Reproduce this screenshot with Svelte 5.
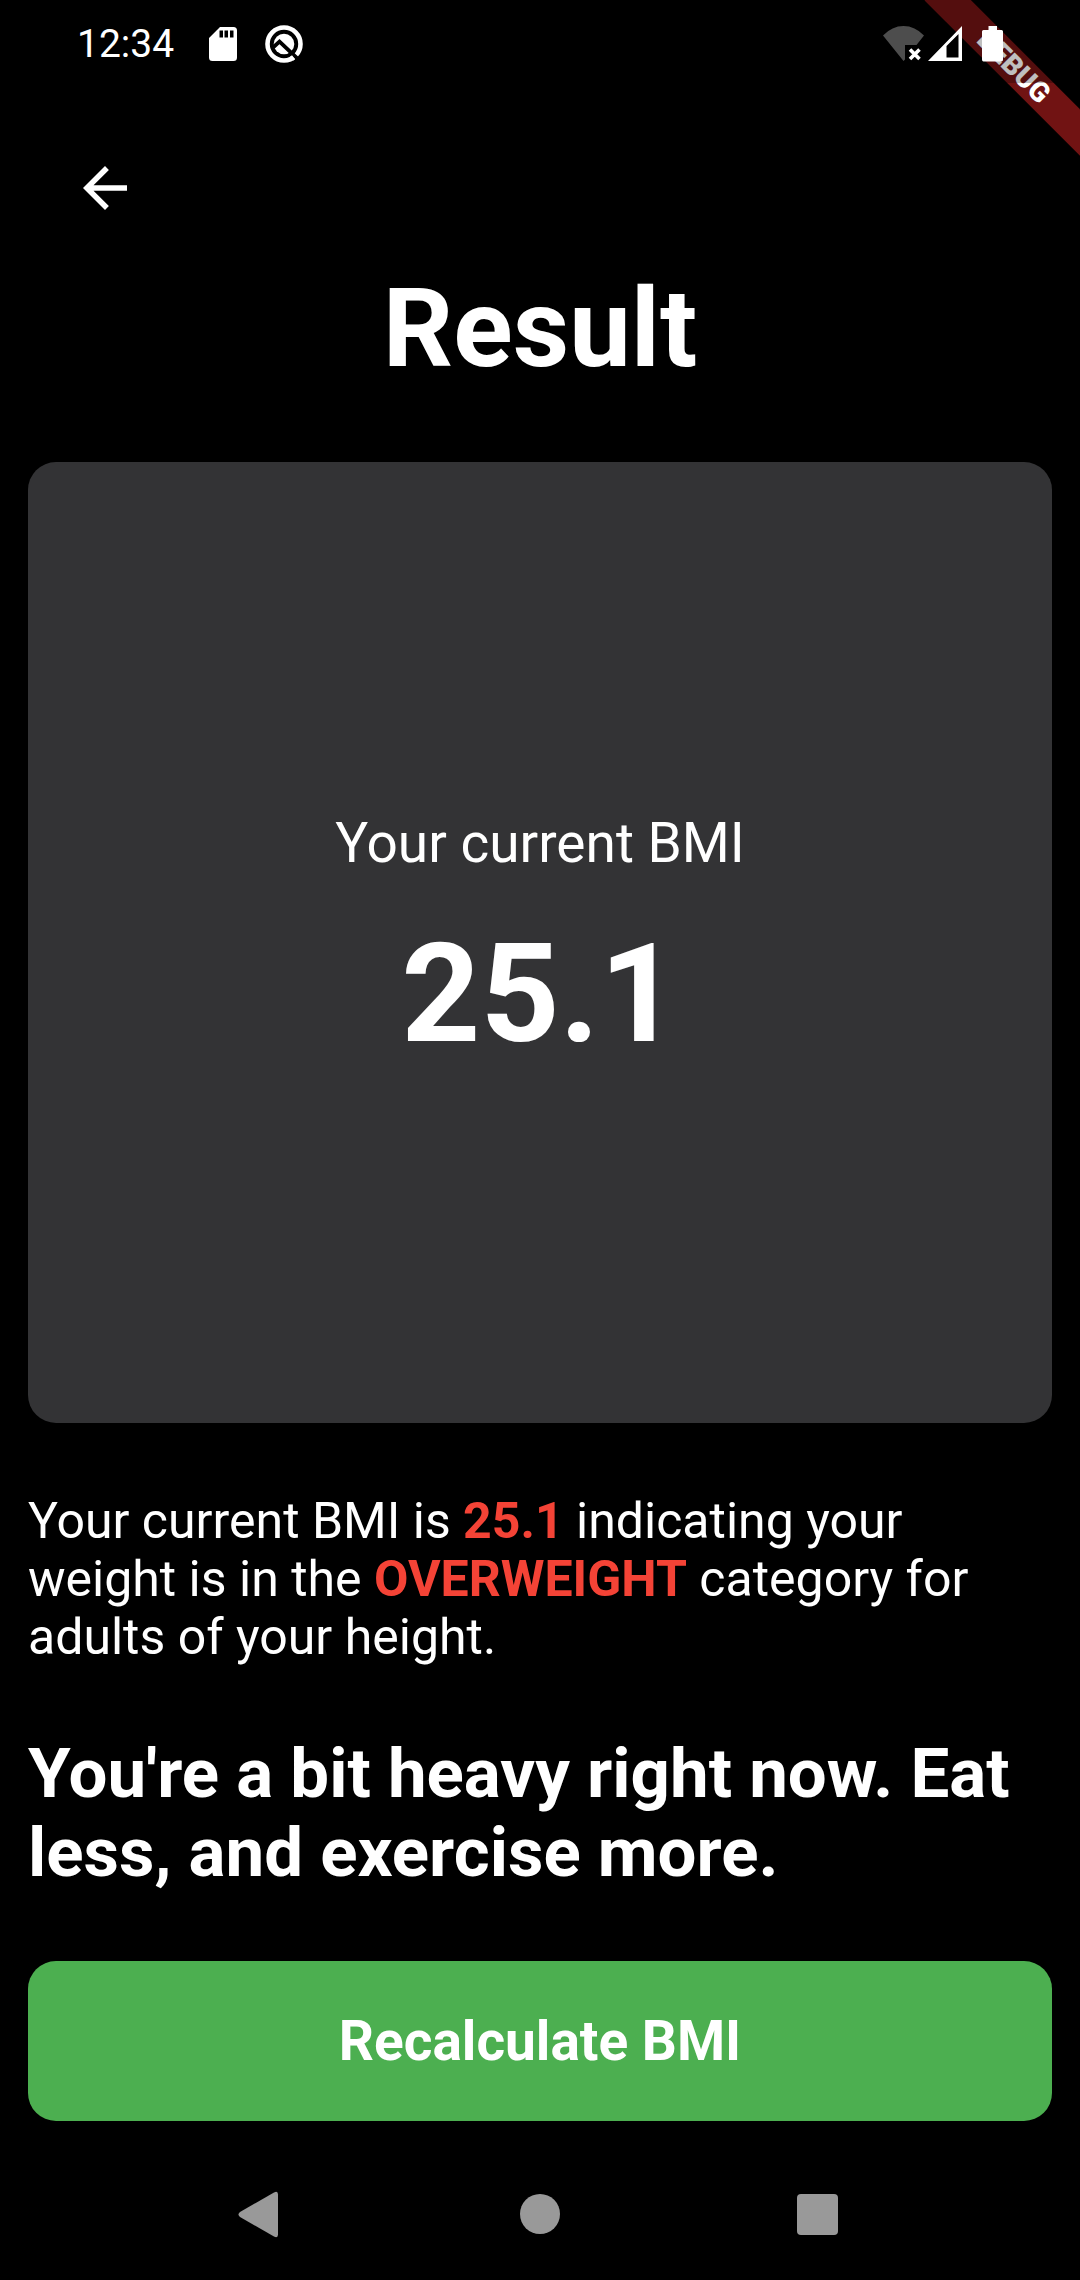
<script>
  let { bmi = 25.1, category = 'OVERWEIGHT' } = $props();
</script>

<div class="screen">
  <div class="banner-clip"><span class="banner">DEBUG</span></div>

  <div class="status">
    <span class="time">12:34</span>
    <svg class="sd" width="28" height="36" viewBox="0 0 28 36" aria-hidden="true">
      <path fill="#fff" fill-rule="evenodd" d="M11 1H24.500a3.500 3.500 0 0 1 3.500 3.500V31.500a3.500 3.500 0 0 1-3.500 3.500H3.500A3.500 3.500 0 0 1 0 31.500V12zM10.500 4.500v7h3.500v-7zM15.500 4.500v7h3.500v-7zM21 4.500v7h3.500v-7z" />
    </svg>
    <svg class="q" width="38" height="38" viewBox="0 0 38 38" aria-hidden="true">
      <circle cx="19" cy="19" r="16.500" fill="none" stroke="#fff" stroke-width="4.600" />
      <circle cx="19" cy="19" r="10.300" fill="#fff" />
      <path d="M8 22.500l6.500-6L36 37" fill="none" stroke="#000" stroke-width="3.800" />
      <path d="M26 31l3 4" stroke="#fff" stroke-width="2.500" />
    </svg>
    <div class="signals">
      <svg width="42" height="36" viewBox="0 0 42 36" aria-hidden="true">
        <path fill="#4d4d4d" d="M0 9.500Q9 0 20.500 0T41 9.500L33.500 19H22v14.500l-1.500 1.500z" />
        <path d="M27 23.500l9.500 9.500M36.500 23.500L27 33" stroke="#fff" stroke-width="3.600" />
      </svg>
      <svg class="cell" width="34" height="36" viewBox="0 0 34 36" aria-hidden="true">
        <path fill="#fff" fill-rule="evenodd" d="M0 35L34 0V35zM18.500 20v11.500h12V8z" />
      </svg>
      <svg class="battery" width="21" height="36" viewBox="0 0 21 36" aria-hidden="true">
        <path fill="#fff" d="M6.500 0h8.500v4h4.500q1.500 0 1.500 1.500v28q0 2-1.500 2h-18q-1.500 0-1.500-2v-28Q0 4 1.500 4h5z" />
      </svg>
    </div>
  </div>

  <header>
    <button class="back" aria-label="Back">
      <svg width="66" height="66" viewBox="0 0 24 24"><path fill="#fff" d="M20 11H7.830l5.590-5.590L12 4l-8 8 8 8 1.410-1.410L7.830 13H20z" /></svg>
    </button>
  </header>

  <main>
    <h1>Result</h1>
    <section class="card">
      <p class="label">Your current BMI</p>
      <p class="value">{bmi}</p>
    </section>
    <p class="summary">
      Your current BMI is <strong>{bmi}</strong> indicating your weight is in the
      <strong>{category}</strong> category for adults of your height.
    </p>
    <h2>You're a bit heavy right now. Eat less, and exercise more.</h2>
    <button class="action">Recalculate BMI</button>
  </main>

  <nav>
    <button aria-label="System back">
      <svg width="48" height="48" viewBox="0 0 48 48"><path fill="#999" d="M4 22L38 2.500q4-2 4 2v40q0 4-4 2L4 27q-3-2.500 0-5z" /></svg>
    </button>
    <button aria-label="Home">
      <svg width="48" height="48" viewBox="0 0 48 48"><circle cx="24" cy="24" r="20" fill="#999" /></svg>
    </button>
    <button aria-label="Recent apps">
      <svg width="48" height="48" viewBox="0 0 48 48"><rect x="1" y="4" width="41" height="41" rx="4" fill="#999" /></svg>
    </button>
  </nav>
</div>

<style>
  :global(body) {
    margin: 0;
    background: #000;
  }
  .screen {
    position: relative;
    display: flex;
    flex-direction: column;
    min-height: 100vh;
    background: #000;
    color: #fff;
    font-family: Roboto, sans-serif;
  }
  p {
    margin: 0;
  }
  svg {
    display: block;
    flex: none;
  }
  button {
    border: 0;
    padding: 0;
    background: none;
    color: inherit;
    font: inherit;
    cursor: pointer;
  }
  .banner-clip {
    position: absolute;
    top: 0;
    right: 0;
    width: 176px;
    height: 176px;
    overflow: hidden;
  }
  .banner {
    position: absolute;
    top: 50px;
    right: -44px;
    width: 220px;
    height: 33px;
    background: #711313;
    font-size: 28px;
    line-height: 33px;
    font-weight: 900;
    text-align: center;
    transform: rotate(45deg);
  }
  .status {
    position: relative;
    display: flex;
    align-items: center;
    box-sizing: border-box;
    height: 83px;
    padding: 4px 77px 0;
    background: rgba(0, 0, 0, 0.25);
  }
  .time {
    font-size: 39px;
    line-height: 46px;
  }
  .sd {
    margin-left: 35px;
  }
  .q {
    margin-left: 28px;
  }
  .signals {
    display: flex;
    margin-left: auto;
  }
  .cell {
    margin-left: 3px;
  }
  .battery {
    margin-left: 20px;
  }
  header {
    padding: 72px 72px 0;
  }
  .back {
    display: block;
  }
  main {
    flex: 1;
    display: flex;
    flex-direction: column;
    padding: 43px 28px 27px;
  }
  h1 {
    margin: 0;
    font-size: 110px;
    line-height: 130px;
    font-weight: 700;
    text-align: center;
  }
  .card {
    flex: 1;
    display: flex;
    flex-direction: column;
    align-items: center;
    justify-content: center;
    gap: 38px;
    margin-top: 68px;
    border-radius: 28px;
    background: #333335;
  }
  .label {
    font-size: 55px;
    line-height: 64px;
  }
  .value {
    font-size: 138px;
    line-height: 162px;
    font-weight: 700;
  }
  .summary {
    margin-top: 69px;
    font-size: 50px;
    line-height: 58px;
  }
  strong {
    color: #f44336;
    font-weight: 700;
  }
  h2 {
    margin: 68px 0 0;
    font-size: 69px;
    line-height: 79px;
    font-weight: 700;
  }
  .action {
    margin-top: 69px;
    height: 160px;
    border-radius: 28px;
    background: #4caf50;
    font-size: 55px;
    font-weight: 700;
  }
  nav {
    display: flex;
    justify-content: center;
    gap: 120px;
    height: 132px;
  }
  nav button {
    display: grid;
    place-items: center;
    width: 160px;
  }
</style>
